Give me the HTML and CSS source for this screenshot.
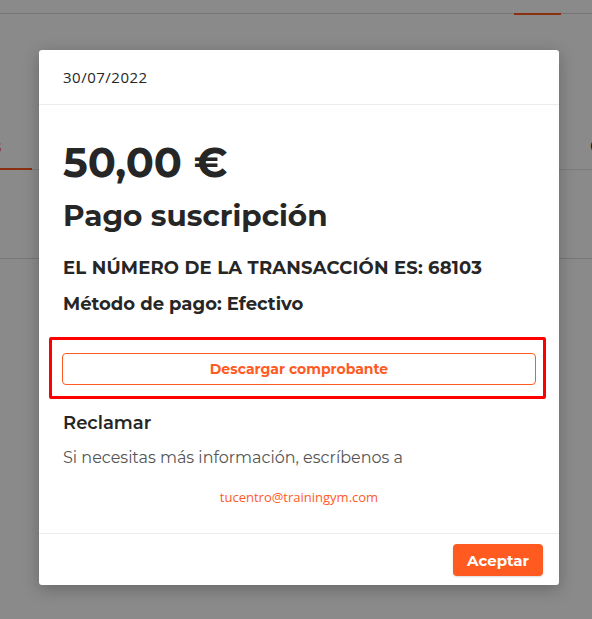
FILE: index.html
```html
<!DOCTYPE html>
<html lang="es">
<head>
<meta charset="utf-8">
<title>Pago</title>
<link rel="stylesheet" href="styles.css">
</head>
<body>
<div class="page">
  <div class="topbar"><span class="topbar-tab"></span></div>
  <div class="tabs">
    <span class="tab tab-active">s</span>
    <span class="tab tab-right">C</span>
  </div>
  <div class="section-line"></div>
</div>
<div class="overlay"></div>
<div class="modal-wrap">
  <div class="modal">
    <div class="modal-header">30/07/2022</div>
    <div class="modal-body">
      <div class="amount">50,00 €</div>
      <div class="title">Pago suscripción</div>
      <div class="info">EL NÚMERO DE LA TRANSACCIÓN ES: 68103</div>
      <div class="info method">Método de pago: Efectivo</div>
      <div class="highlight">
        <button class="btn-outline">Descargar comprobante</button>
      </div>
      <div class="claim">Reclamar</div>
      <div class="claim-text">Si necesitas más información, escríbenos a</div>
      <div class="email">tucentro@trainingym.com</div>
    </div>
    <div class="modal-footer">
      <button class="btn-primary">Aceptar</button>
    </div>
  </div>
</div>
</body>
</html>
```

FILE: styles.css
```css
* { box-sizing: border-box; }
html, body { margin: 0; padding: 0; }
body {
  width: 592px;
  height: 619px;
  overflow: hidden;
  background: #fff;
  font-family: "Montserrat", "Inter", "Open Sans", sans-serif;
  color: #262626;
  position: relative;
}
.page { width: 592px; height: 619px; }
.topbar {
  height: 14px;
  border-bottom: 1px solid #d8d8d8;
  position: relative;
}
.topbar-tab {
  position: absolute;
  left: 514px;
  top: 13px;
  width: 47px;
  height: 2px;
  background: #ff5a1f;
}
.tabs {
  margin-top: 123px;
  height: 33px;
  display: flex;
  justify-content: space-between;
  border-bottom: 1px solid #e4e4e4;
  font-family: "Open Sans", sans-serif;
  font-size: 16px;
}
.tab { line-height: 18px; }
.tab-active {
  color: #ff5a1f;
  width: 38px;
  margin-left: -6px;
  border-bottom: 2px solid #ff5a1f;
  height: 33px;
}
.tab-right { margin-right: -8px; color: #222; }
.section-line {
  margin-top: 88px;
  border-top: 1px solid #dcdcdc;
}
.overlay {
  position: absolute;
  inset: 0;
  background: rgba(0, 0, 0, 0.46);
}
.modal-wrap {
  position: absolute;
  inset: 0;
  padding: 50px 0 0 39px;
}
.modal {
  width: 520px;
  background: #fff;
  border-radius: 3px;
  box-shadow: 0 4px 16px rgba(0,0,0,0.25);
}
.modal-header {
  height: 55px;
  padding: 17px 24px 0;
  border-bottom: 1px solid #ececec;
  font-family: "Open Sans", sans-serif;
  font-size: 15px;
  letter-spacing: 0.5px;
  line-height: 20px;
  color: #262626;
}
.modal-body {
  padding: 33px 24px 0;
}
.amount {
  font-size: 41.5px;
  font-weight: 700;
  line-height: 48px;
}
.title {
  margin-top: 10px;
  font-size: 29.5px;
  font-weight: 700;
  line-height: 38px;
}
.info {
  margin-top: 23px;
  font-size: 18px;
  font-weight: 700;
  line-height: 22px;
}
.info:not(.method) { letter-spacing: 0.2px; }
.info.method { margin-top: 14px; }
.highlight {
  margin: 22px -11px 0 -14px;
  border: 3px solid #ff0000;
  border-radius: 2px;
  padding: 13px 7px 11px 10px;
}
.btn-outline {
  display: block;
  width: 100%;
  height: 32px;
  background: #fff;
  border: 1px solid #ff5a1f;
  border-radius: 4px;
  color: #ff5a1f;
  font-family: inherit;
  font-size: 14px;
  font-weight: 700;
}
.claim {
  margin-top: 12px;
  font-size: 18px;
  font-weight: 600;
  line-height: 24px;
}
.claim-text {
  margin-top: 12px;
  font-size: 16px;
  color: #555;
  line-height: 22px;
}
.email {
  margin-top: 19px;
  text-align: center;
  font-family: "Open Sans", sans-serif;
  font-size: 13px;
  color: #ff5a1f;
  line-height: 18px;
  padding-bottom: 27px;
}
.modal-footer {
  border-top: 1px solid #ececec;
  padding: 10px 16px 9px;
  display: flex;
  justify-content: flex-end;
}
.btn-primary {
  width: 90px;
  height: 32px;
  background: #ff5a1f;
  color: #fff;
  border: none;
  border-radius: 4px;
  font-family: "Montserrat", "Inter", sans-serif;
  font-size: 15px;
  font-weight: 700;
  box-shadow: 0 1px 2px rgba(0,0,0,0.15);
}
```
